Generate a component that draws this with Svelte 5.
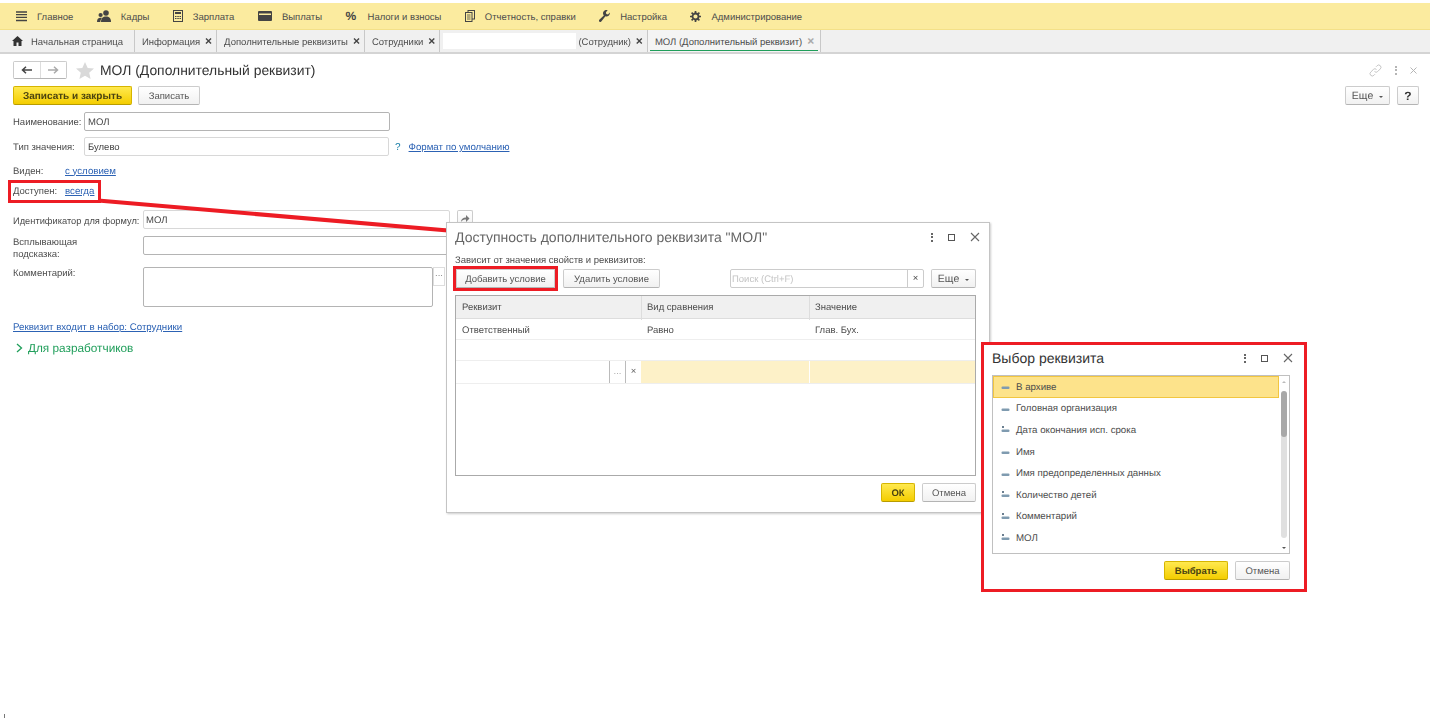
<script>
    // top section panel
    const sections = [
        { name: 'menu', text: 'Главное' },
        { name: 'people', text: 'Кадры' },
        { name: 'calc', text: 'Зарплата' },
        { name: 'card', text: 'Выплаты' },
        { name: 'percent', text: 'Налоги и взносы' },
        { name: 'docs', text: 'Отчетность, справки' },
        { name: 'wrench', text: 'Настройка' },
        { name: 'gear', text: 'Администрирование' }
    ];

    const tabs = ['Информация', 'Дополнительные реквизиты', 'Сотрудники'];

    const attributes = [
        { text: 'В архиве', kind: 'flag', selected: true },
        { text: 'Головная организация', kind: 'flag' },
        { text: 'Дата окончания исп. срока', kind: 'field' },
        { text: 'Имя', kind: 'flag' },
        { text: 'Имя предопределенных данных', kind: 'flag' },
        { text: 'Количество детей', kind: 'field' },
        { text: 'Комментарий', kind: 'field' },
        { text: 'МОЛ', kind: 'field' }
    ];
</script>

{#snippet winControls()}
    <div class="win-controls">
        <span class="dots"><i></i><i></i><i></i></span>
        <span class="square"></span>
        <svg width="10" height="10" viewBox="0 0 10 10"><path d="M1 1l8 8M9 1l-8 8" stroke="#666" stroke-width="1.1" fill="none" /></svg>
    </div>
{/snippet}

{#snippet more()}
    <button class="btn more">Еще <span class="caret"></span></button>
{/snippet}

<div class="page">
    <nav class="sections">
        {#each sections as s}
            <div class="section">
                {#if s.name === 'menu'}
                    <svg width="11" height="11" viewBox="0 0 11 11"><path d="M0 1h11M0 3.7h11M0 6.4h11M0 9.5h11" stroke="#444" stroke-width="1.3" /></svg>
                {:else if s.name === 'people'}
                    <svg width="14" height="12" viewBox="0 0 14 12" fill="#444"><circle cx="9" cy="3" r="2.8" /><path d="M4 12c0-4 2-5.500 5-5.500s5 1.500 5 5.500z" /><circle cx="3.600" cy="5" r="2.100" /><path d="M0 12c0-3 1.200-4.300 3.600-4.300 .6 0 1 .1 1.400 .3-1 1-1.600 2.200-1.700 4z" /></svg>
                {:else if s.name === 'calc'}
                    <svg width="10" height="12" viewBox="0 0 10 12"><rect x=".5" y=".5" width="9" height="11" fill="none" stroke="#444" /><rect x="2" y="2" width="6" height="2" fill="#444" /><path d="M2 6h1.500v1H2zM4.300 6h1.500v1H4.300zM6.500 6H8v1H6.500zM2 8h1.500v1H2zM4.300 8h1.500v1H4.300zM6.500 8H8v1H6.500z" fill="#444" /></svg>
                {:else if s.name === 'card'}
                    <svg width="14" height="10" viewBox="0 0 14 10"><rect y="0" width="14" height="10" rx="1" fill="#444" /><rect x="1" y="2.500" width="12" height="1.500" fill="#fbeb9f" /></svg>
                {:else if s.name === 'percent'}
                    <span class="percent">%</span>
                {:else if s.name === 'docs'}
                    <svg width="10" height="12" viewBox="0 0 10 12" fill="none" stroke="#444"><rect x="3" y=".5" width="6.500" height="8.500" /><rect x=".5" y="2.500" width="6.500" height="9" fill="#fbeb9f" /><path d="M2 5h3.500M2 7h3.500M2 9h3.500" stroke-width=".8" /></svg>
                {:else if s.name === 'wrench'}
                    <svg width="11" height="12" viewBox="0 0 11 12"><path d="M10.800 2.600a3.300 3.300 0 0 1-4.400 3.600L2.300 11.500a1.300 1.300 0 0 1-2-1.700L4.800 5.400A3.300 3.300 0 0 1 8.700.3L6.900 2.300l.4 1.700 1.700 .4z" fill="#444" /></svg>
                {:else}
                    <svg width="11" height="11" viewBox="0 0 11 11"><circle cx="5.500" cy="5.500" r="3" fill="none" stroke="#444" stroke-width="1.800" /><path d="M5.500 0v2M5.500 9v2M0 5.500h2M9 5.500h2M1.600 1.600L3 3M8 8l1.400 1.400M9.400 1.600L8 3M3 8L1.600 9.400" stroke="#444" stroke-width="1.700" /></svg>
                {/if}
                <span class="section-text">{s.text}</span>
            </div>
        {/each}
    </nav>

    <div class="tabs">
        <div class="tab home">
            <svg width="11" height="10" viewBox="0 0 11 10"><path d="M5.500 0L0 5h1.500v5h3V6.500h2V10h3V5H11z" fill="#333" /></svg>
            <span class="tab-text">Начальная страница</span>
        </div>
        {#each tabs as t}
            <div class="tab"><span class="tab-text">{t}</span><b class="close">×</b></div>
        {/each}
        <div class="tab hidden-name">
            <span class="blank"></span>
            <span class="tab-text">(Сотрудник)</span><b class="close">×</b>
        </div>
        <div class="tab active"><span class="tab-text">МОЛ (Дополнительный реквизит)</span><b class="close">×</b></div>
    </div>

    <main class="form">
        <header class="form-head">
            <div class="history">
                <button aria-label="Назад"><svg width="11" height="8" viewBox="0 0 11 8"><path d="M11 4H2M5 .8L1.500 4 5 7.200" stroke="#444" stroke-width="1.500" fill="none" /></svg></button>
                <button aria-label="Вперед"><svg width="11" height="8" viewBox="0 0 11 8"><path d="M0 4h9M6 .8L9.500 4 6 7.200" stroke="#aaa" stroke-width="1.500" fill="none" /></svg></button>
            </div>
            <svg class="star" width="18" height="17" viewBox="0 0 18 17"><path d="M9 0l2.700 6 6.300 .6-4.800 4.200L14.600 17 9 13.800 3.400 17l1.400-6.200L0 6.600 6.300 6z" fill="#d9d9d9" /></svg>
            <h1>МОЛ (Дополнительный реквизит)</h1>
            <div class="head-tools">
                <svg width="13" height="13" viewBox="0 0 13 13" fill="none" stroke="#c4c4c4"><path d="M5.500 7.500a2.200 2.200 0 0 0 3.200 0l2.600-2.600a2.200 2.200 0 0 0-3.200-3.200L7 2.800" /><path d="M7.500 5.500a2.200 2.200 0 0 0-3.200 0L1.700 8.100a2.200 2.200 0 0 0 3.200 3.200L6 10.200" /></svg>
                <span class="dots light"><i></i><i></i><i></i></span>
                <svg width="7" height="7" viewBox="0 0 7 7"><path d="M.5 .5l6 6M6.500 .5l-6 6" stroke="#b5b5b5" fill="none" /></svg>
            </div>
        </header>

        <div class="commands">
            <button class="btn primary">Записать и закрыть</button>
            <button class="btn save">Записать</button>
            <div class="commands-right">
                {@render more()}
                <button class="btn help">?</button>
            </div>
        </div>

        <div class="row name-row">
            <span class="label w71">Наименование:</span>
            <div class="input strong name-input">МОЛ</div>
        </div>
        <div class="row type-row">
            <span class="label w71">Тип значения:</span>
            <div class="input type-input">Булево</div>
            <span class="hint">?</span>
            <a href="#format" class="link">Формат по умолчанию</a>
        </div>
        <div class="row text-row visible-row">
            <span class="label w52">Виден:</span>
            <a href="#visible" class="link">с условием</a>
        </div>
        <div class="row text-row avail-row">
            <div class="boxed">
                <span class="w52">Доступен:</span>
                <a href="#available" class="link">всегда</a>
            </div>
        </div>
        <div class="row id-row">
            <span class="label w130">Идентификатор для формул:</span>
            <div class="input id-input">МОЛ</div>
            <button class="btn tool" aria-label="Действие"><svg width="10" height="9" viewBox="0 0 10 9"><path d="M1 8c0-3 2-4.500 5-4.500V1l3.500 3.500L6 8V5.500C4 5.500 2 6 1 8z" fill="#777" /></svg></button>
        </div>
        <div class="row tip-row">
            <span class="w130 two-lines">Всплывающая подсказка:</span>
            <div class="input strong tip-input"></div>
        </div>
        <div class="row comment-row">
            <span class="w130 comment-label">Комментарий:</span>
            <div class="input strong comment-input"></div>
            <span class="choose">...</span>
        </div>
        <a href="#set" class="link set-link">Реквизит входит в набор: Сотрудники</a>
        <div class="dev">
            <svg width="7" height="10" viewBox="0 0 7 10"><path d="M1 1l4.500 4L1 9" stroke="#1f9e5a" stroke-width="1.300" fill="none" /></svg>
            <span>Для разработчиков</span>
        </div>
    </main>

    <svg class="pointer" width="1430" height="718" aria-hidden="true"><path d="M98 200.500L448 230.500" stroke="#ed1c24" stroke-width="4" /></svg>

    <section class="window availability">
        <div class="win-head">
            <h2>Доступность дополнительного реквизита "МОЛ"</h2>
            {@render winControls()}
        </div>
        <p class="caption">Зависит от значения свойств и реквизитов:</p>
        <div class="toolbar">
            <button class="btn add">Добавить условие</button>
            <button class="btn remove">Удалить условие</button>
            <div class="search">
                <span class="placeholder">Поиск (Ctrl+F)</span>
                <span class="search-clear">×</span>
            </div>
            {@render more()}
        </div>
        <div class="grid">
            <div class="grid-row head">
                <span>Реквизит</span><span>Вид сравнения</span><span>Значение</span>
            </div>
            <div class="grid-row">
                <span>Ответственный</span><span>Равно</span><span>Глав. Бух.</span>
            </div>
            <div class="grid-row"></div>
            <div class="grid-row editing">
                <span class="edit-cell"><i>...</i><i class="x">×</i></span><span></span><span></span>
            </div>
        </div>
        <div class="win-foot">
            <button class="btn primary ok">ОК</button>
            <button class="btn cancel">Отмена</button>
        </div>
    </section>

    <section class="window picker">
        <div class="win-head">
            <h2>Выбор реквизита</h2>
            {@render winControls()}
        </div>
        <div class="list">
            <div class="list-rows">
                {#each attributes as a}
                    <div class="list-row" class:selected={a.selected}>
                        <svg width="9" height="9" viewBox="0 0 9 9">
                            {#if a.kind === 'field'}
                                <rect x="1" y="1" width="2" height="2" fill="#6b7f90" />
                            {/if}
                            <rect x=".5" y="4.500" width="8" height="2.500" rx="1" fill="#7f9bb0" />
                        </svg>
                        <span class="list-text">{a.text}</span>
                    </div>
                {/each}
            </div>
            <div class="scroll">
                <span class="arrow up"></span>
                <span class="thumb"></span>
                <span class="arrow down"></span>
            </div>
        </div>
        <div class="win-foot">
            <button class="btn primary pick">Выбрать</button>
            <button class="btn cancel">Отмена</button>
        </div>
    </section>

    <span class="tick"></span>
</div>

<style>
    :global(body)
    {
        margin: 0;
        background: #fff;
        overflow: hidden;
    }

    .page
    {
        position: relative;
        height: 718px;
        padding-top: 3px;
        box-sizing: border-box;
        overflow: hidden;
        font-family: "Liberation Sans", Arial, sans-serif;
        font-size: 9.5px;
        text-rendering: geometricPrecision;
        color: #4c4c4c;
        filter: blur(0.3px);
    }

    button
    {
        font-family: inherit;
        font-size: 9.5px;
        color: inherit;
        padding: 0;
        text-rendering: geometricPrecision;
    }

    /* sections */
    .sections
    {
        height: 27px;
        box-sizing: border-box;
        display: flex;
        align-items: center;
        gap: 23.5px;
        padding-left: 16px;
        background: #fbeb9f;
        border-bottom: 1px solid #f3e088;
    }

    .section
    {
        display: flex;
        align-items: center;
        gap: 10px;
    }

    .section-text,
    .tab-text
    {
        padding-top: 2px;
    }

    .percent
    {
        width: 12px;
        font-size: 12px;
        font-weight: bold;
        color: #444;
    }

    /* tabs */
    .tabs
    {
        height: 24px;
        box-sizing: border-box;
        display: flex;
        background: #f0f0f0;
        border-bottom: 2px solid #d4d4d4;
    }

    .tab
    {
        display: flex;
        align-items: center;
        gap: 5px;
        padding: 0 4px 0 7px;
        border-right: 1.500px solid #c8c8c8;
        white-space: nowrap;
    }

    .home
    {
        gap: 8px;
        padding: 0 11px 0 12px;
    }

    .close
    {
        font-size: 12px;
        line-height: 1;
        color: #444;
    }

    .hidden-name
    {
        gap: 2px;
        padding-left: 3px;
    }

    .hidden-name .close
    {
        margin-left: 3px;
    }

    .blank
    {
        width: 133px;
        height: 16px;
        background: #fff;
    }

    .active
    {
        position: relative;
        padding-right: 6px;
        background: #f4f4f4;
    }

    .active::after
    {
        content: "";
        position: absolute;
        left: 2px;
        right: 2px;
        bottom: 1px;
        height: 1px;
        background: #1f9e5a;
    }

    .active .close
    {
        color: #aaa;
    }

    /* form */
    .form
    {
        padding: 6px 11px 0 13px;
        display: flex;
        flex-direction: column;
    }

    .form-head
    {
        height: 20px;
        display: flex;
        align-items: center;
    }

    .history
    {
        display: flex;
        width: 54px;
        height: 18px;
        box-sizing: border-box;
        border: 1px solid #ccc;
        border-bottom-color: #b5b5b5;
        border-radius: 2px;
    }

    .history button
    {
        flex: 1;
        border: 0;
        background: #fff;
        display: flex;
        align-items: center;
        justify-content: center;
    }

    .history button + button
    {
        border-left: 1px solid #ddd;
    }

    .star
    {
        margin-left: 9px;
    }

    h1
    {
        margin: 0 0 0 6px;
        font-size: 13.900px;
        font-weight: normal;
        color: #333;
    }

    .head-tools
    {
        margin-left: auto;
        display: flex;
        align-items: center;
        gap: 13px;
        padding-right: 2px;
    }

    .dots
    {
        display: inline-flex;
        flex-direction: column;
        gap: 1.500px;
    }

    .dots i
    {
        width: 2px;
        height: 2px;
        background: #666;
    }

    .dots.light i
    {
        background: #b5b5b5;
    }

    .commands
    {
        margin-top: 6px;
        height: 20px;
        display: flex;
        gap: 6px;
    }

    .commands-right
    {
        margin-left: auto;
        display: flex;
        gap: 7px;
    }

    .btn
    {
        height: 19px;
        box-sizing: border-box;
        padding-top: 1px;
        background: linear-gradient(#fff, #f1f1f1);
        border: 1px solid #ccc;
        border-bottom-color: #b4b4b4;
        border-radius: 2px;
        white-space: nowrap;
        color: #555;
    }

    .primary
    {
        background: linear-gradient(#ffe94f, #f4cd00);
        border-color: #d6b500;
        border-bottom-color: #b89c00;
        color: #4a4310;
        font-weight: bold;
    }

    .commands .primary { width: 119px; font-size: 10px; }
    .save { width: 62px; }
    .more { width: 45px; font-size: 10.500px; }
    .help { width: 22px; font-size: 12px; font-weight: bold; color: #333; }

    .caret
    {
        display: inline-block;
        margin-left: 3px;
        vertical-align: 1px;
        border: 2.500px solid transparent;
        border-top-color: #555;
        border-bottom-width: 0;
    }

    .row
    {
        display: flex;
        align-items: center;
        height: 19px;
        white-space: nowrap;
    }

    .row > .label,
    .row > .link
    {
        padding-top: 2px;
    }

    .name-row { margin-top: 6px; }
    .type-row { margin-top: 6px; }
    .text-row { height: 14px; }
    .visible-row { margin-top: 7px; }
    .avail-row { margin-top: 7px; }
    .id-row { margin-top: 12px; }
    .id-row .label { font-size: 9.300px; }
    .tip-row { margin-top: 7px; }
    .comment-row { margin-top: 12px; height: 40px; align-items: flex-start; }

    .w71 { width: 71px; }
    .w52 { width: 52px; }
    .w130 { width: 130px; }

    .two-lines
    {
        white-space: normal;
        width: 80px;
        margin-right: 50px;
        line-height: 12px;
        padding-top: 2px;
        height: 19px;
    }

    .comment-label
    {
        padding-top: 1px;
    }

    .input
    {
        height: 19px;
        box-sizing: border-box;
        border: 1px solid #d8d8d8;
        border-radius: 2px;
        padding: 1px 2px 0;
        line-height: 17px;
        background: #fff;
        color: #444;
    }

    .strong { border-color: #b4b4b4; }
    .name-input { width: 306px; padding-left: 3px; }
    .type-input { width: 305px; padding-left: 3px; }
    .id-input { width: 307px; }
    .tip-input { width: 320px; }
    .comment-input { width: 290px; height: 40px; }

    .choose
    {
        width: 12px;
        height: 19px;
        box-sizing: border-box;
        border: 1px solid #ddd;
        text-align: center;
        color: #888;
    }

    .hint
    {
        margin: 0 8px 0 6px;
        padding-top: 1px;
        font-size: 10px;
        color: #1a7fa8;
    }

    .link
    {
        font-size: 9.700px;
        color: #2c62b4;
        text-decoration: underline;
    }

    .boxed
    {
        display: flex;
        align-items: center;
        width: 85px;
        height: 15px;
        outline: 3px solid #ed1c24;
        outline-offset: 1px;
        margin-left: -1px;
        padding-left: 1px;
        box-sizing: border-box;
    }

    .tool
    {
        width: 16px;
        margin-left: 7px;
    }

    .set-link
    {
        margin-top: 15px;
        align-self: flex-start;
    }

    .dev
    {
        margin-top: 8px;
        margin-left: 3px;
        display: flex;
        align-items: center;
        gap: 5px;
        font-size: 11.800px;
        color: #1f9e5a;
    }

    /* callout line */
    .pointer
    {
        position: absolute;
        left: 0;
        top: 0;
        pointer-events: none;
    }

    /* windows */
    .window
    {
        position: absolute;
        box-sizing: border-box;
        background: #fff;
        display: flex;
        flex-direction: column;
    }

    .availability
    {
        left: 446px;
        top: 222px;
        width: 544px;
        height: 291px;
        padding: 0 13px 0 8px;
        border: 1px solid #c4c4c4;
        box-shadow: 1px 1px 2px rgba(0, 0, 0, 0.2);
    }

    .win-head
    {
        display: flex;
        align-items: center;
        justify-content: space-between;
    }

    .availability .win-head { height: 28px; }

    h2
    {
        margin: 0;
        font-size: 14px;
        font-weight: normal;
        color: #666;
    }

    .win-controls
    {
        display: flex;
        align-items: center;
        gap: 15px;
        margin-right: -4px;
    }

    .square
    {
        width: 7px;
        height: 7px;
        box-sizing: border-box;
        border: 1px solid #555;
    }

    .caption
    {
        margin: 4px 0 0;
        line-height: 12px;
    }

    .toolbar
    {
        margin-top: 2px;
        display: flex;
        gap: 8px;
    }

    .add
    {
        width: 99px;
        height: 19px;
        margin-left: 1px;
        border-radius: 0;
        outline: 3px solid #ed1c24;
        outline-offset: 0;
    }

    .remove { width: 97px; margin-left: 0; }

    .search
    {
        margin-left: auto;
        width: 194px;
        height: 19px;
        box-sizing: border-box;
        border: 1px solid #ccc;
        border-radius: 2px;
        display: flex;
        justify-content: space-between;
        align-items: center;
        margin-right: -1px;
    }

    .placeholder
    {
        color: #c4c4c4;
        padding: 1px 0 0 1px;
    }

    .search-clear
    {
        width: 15px;
        border-left: 1px solid #ccc;
        text-align: center;
        line-height: 17px;
    }

    .grid
    {
        margin-top: 7px;
        height: 181px;
        box-sizing: border-box;
        border: 1px solid #aaa;
    }

    .grid-row
    {
        display: grid;
        grid-template-columns: 185px 168px 1fr;
        height: 21px;
        line-height: 23px;
        box-sizing: border-box;
        border-bottom: 1px solid #eee;
    }

    .grid-row span { padding-left: 6px; }

    .head
    {
        height: 23px;
        line-height: 24px;
        background: #f0f0f0;
        border-bottom: 1px solid #ddd;
    }

    .head span + span { border-left: 1px solid #ddd; padding-left: 5px; }

    .editing
    {
        height: 23px;
        line-height: 21px;
        background: #fdf1c8;
    }

    .editing span + span + span { border-left: 1px solid #fff; padding-left: 0; }

    .grid-row .edit-cell
    {
        padding: 0;
        background: #fff;
        display: flex;
        justify-content: flex-end;
    }

    .edit-cell i
    {
        width: 15px;
        border-left: 1px solid #bbb;
        font-style: normal;
        text-align: center;
        color: #aaa;
    }

    .edit-cell .x { color: #666; }

    .win-foot
    {
        display: flex;
        justify-content: flex-end;
        gap: 7px;
        margin-top: 7px;
    }

    .ok { width: 34px; }
    .cancel { width: 54px; }

    .picker
    {
        left: 981px;
        top: 342px;
        width: 326px;
        height: 250px;
        padding: 0 14px 0 8px;
        border: 3px solid #ed1c24;
    }

    .picker .win-head
    {
        height: 30px;
        padding-bottom: 4px;
        box-sizing: border-box;
    }

    .picker h2
    {
        font-size: 14px;
        color: #333;
    }

    .picker .win-controls { margin-right: -3px; }

    .list
    {
        height: 179px;
        box-sizing: border-box;
        border: 1px solid #c0c0c0;
        display: flex;
    }

    .list-rows
    {
        flex: 1;
    }

    .list-row
    {
        height: 21.600px;
        box-sizing: border-box;
        display: flex;
        align-items: center;
        gap: 6px;
        padding-left: 8px;
    }

    .list-text
    {
        padding-top: 1px;
        font-size: 9.700px;
    }

    .selected
    {
        background: #fde38b;
        border: 1px solid #f2c640;
        padding-left: 7px;
    }

    .scroll
    {
        width: 10px;
        display: flex;
        flex-direction: column;
        align-items: center;
        padding: 5px 0 4px;
        box-sizing: border-box;
        position: relative;
    }

    .scroll::before
    {
        content: "";
        position: absolute;
        left: 2px;
        top: 17px;
        width: 6px;
        height: 145px;
        border-radius: 3px;
        background: #e0e0e0;
    }

    .thumb
    {
        position: relative;
        width: 6px;
        height: 46px;
        margin-top: 8px;
        border-radius: 3px;
        background: #a8a8a8;
    }

    .arrow
    {
        border: 2px solid transparent;
    }

    .up
    {
        border-bottom-color: #bbb;
        border-top-width: 0;
    }

    .down
    {
        margin-top: auto;
        border-top-color: #555;
        border-bottom-width: 0;
    }

    .pick { width: 64px; }
    .picker .cancel { width: 55px; }

    .tick
    {
        position: absolute;
        left: 4px;
        top: 714px;
        width: 1px;
        height: 4px;
        background: #777;
    }
</style>
